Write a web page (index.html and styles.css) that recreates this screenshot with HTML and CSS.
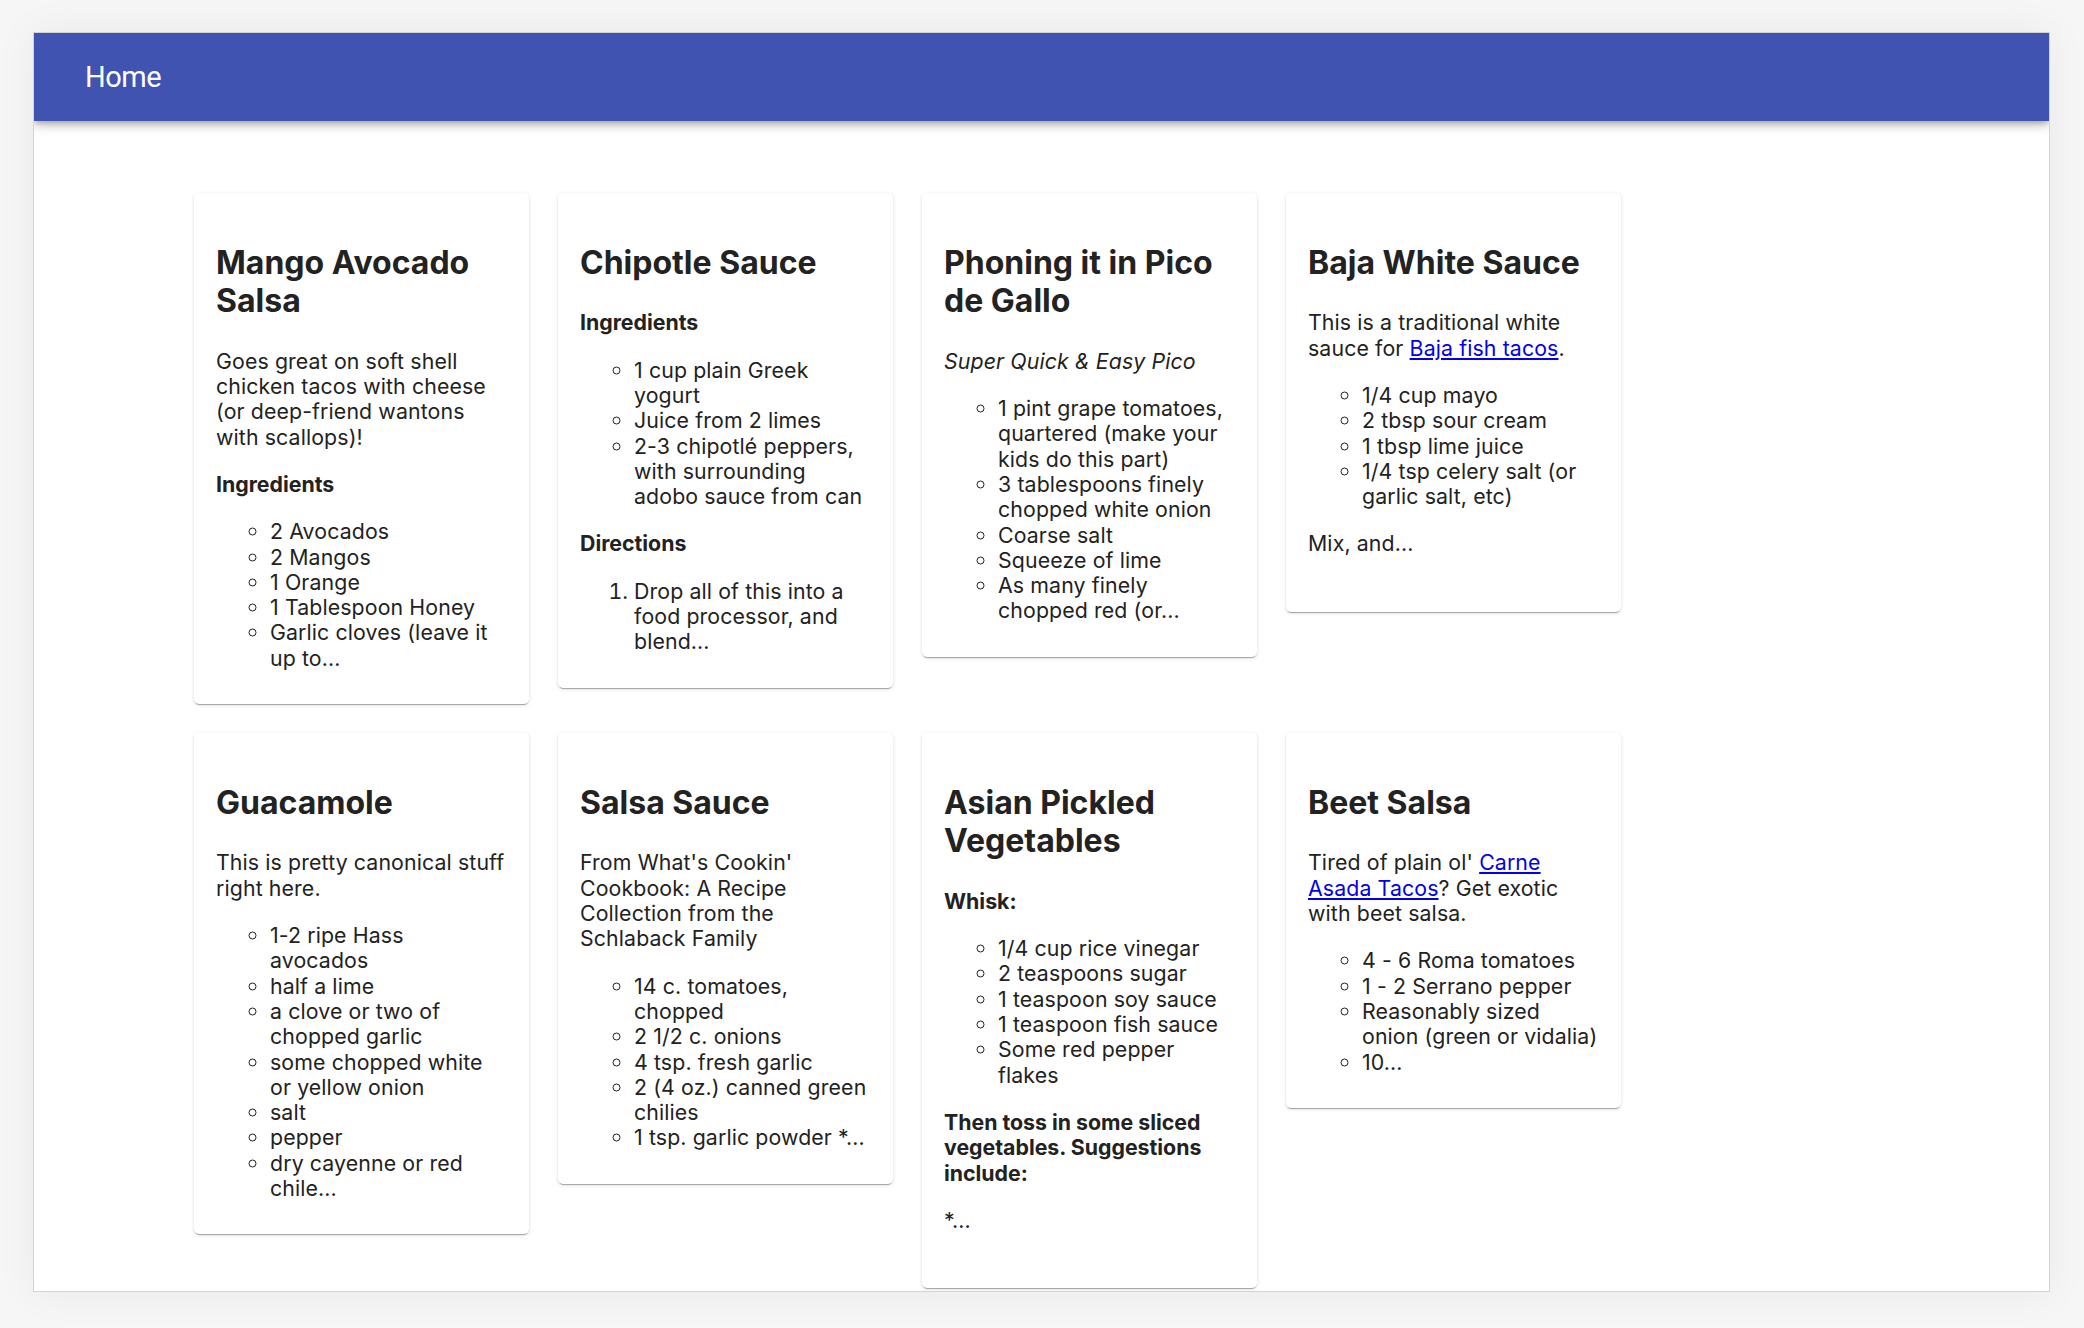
FILE: index.html
```html
<!DOCTYPE html>
<html lang="en">
<head>
<meta charset="utf-8">
<title>Home</title>
<link rel="stylesheet" href="styles.css">
</head>
<body>
<div class="window">
  <header class="appbar">
    <a class="home" href="#">Home</a>
  </header>
  <main class="content">
    <div class="grid">
      <article class="card">
        <h2>Mango Avocado Salsa</h2>
        <p>Goes great on soft shell chicken tacos with cheese (or deep-friend wantons with scallops)!</p>
        <h4>Ingredients</h4>
        <ul>
          <li>2 Avocados</li>
          <li>2 Mangos</li>
          <li>1 Orange</li>
          <li>1 Tablespoon Honey</li>
          <li>Garlic cloves (leave it up to...</li>
        </ul>
      </article>
      <article class="card">
        <h2>Chipotle Sauce</h2>
        <h4>Ingredients</h4>
        <ul>
          <li>1 cup plain Greek yogurt</li>
          <li>Juice from 2 limes</li>
          <li>2-3 chipotlé peppers, with surrounding adobo sauce from can</li>
        </ul>
        <h4>Directions</h4>
        <ol>
          <li>Drop all of this into a food processor, and blend...</li>
        </ol>
      </article>
      <article class="card">
        <h2>Phoning it in Pico de Gallo</h2>
        <p><em>Super Quick &amp; Easy Pico</em></p>
        <ul>
          <li>1 pint grape tomatoes, quartered (make your kids do this part)</li>
          <li>3 tablespoons finely chopped white onion</li>
          <li>Coarse salt</li>
          <li>Squeeze of lime</li>
          <li>As many finely chopped red (or...</li>
        </ul>
      </article>
      <article class="card">
        <h2>Baja White Sauce</h2>
        <p>This is a traditional white sauce for <a href="#">Baja fish tacos</a>.</p>
        <ul>
          <li>1/4 cup mayo</li>
          <li>2 tbsp sour cream</li>
          <li>1 tbsp lime juice</li>
          <li>1/4 tsp celery salt (or garlic salt, etc)</li>
        </ul>
        <p>Mix, and...</p>
      </article>
      <article class="card">
        <h2>Guacamole</h2>
        <p>This is pretty canonical stuff right here.</p>
        <ul>
          <li>1-2 ripe Hass avocados</li>
          <li>half a lime</li>
          <li>a clove or two of chopped garlic</li>
          <li>some chopped white or yellow onion</li>
          <li>salt</li>
          <li>pepper</li>
          <li>dry cayenne or red chile...</li>
        </ul>
      </article>
      <article class="card">
        <h2>Salsa Sauce</h2>
        <p>From What's Cookin' Cookbook: A Recipe Collection from the Schlaback Family</p>
        <ul>
          <li>14 c. tomatoes, chopped</li>
          <li>2 1/2 c. onions</li>
          <li>4 tsp. fresh garlic</li>
          <li>2 (4 oz.) canned green chilies</li>
          <li>1 tsp. garlic powder *...</li>
        </ul>
      </article>
      <article class="card">
        <h2>Asian Pickled Vegetables</h2>
        <h4>Whisk:</h4>
        <ul>
          <li>1/4 cup rice vinegar</li>
          <li>2 teaspoons sugar</li>
          <li>1 teaspoon soy sauce</li>
          <li>1 teaspoon fish sauce</li>
          <li>Some red pepper flakes</li>
        </ul>
        <h4>Then toss in some sliced vegetables. Suggestions include:</h4>
        <p>*...</p>
      </article>
      <article class="card">
        <h2>Beet Salsa</h2>
        <p>Tired of plain ol' <a href="#">Carne Asada Tacos</a>? Get exotic with beet salsa.</p>
        <ul>
          <li>4 - 6 Roma tomatoes</li>
          <li>1 - 2 Serrano pepper</li>
          <li>Reasonably sized onion (green or vidalia)</li>
          <li>10...</li>
        </ul>
      </article>
    </div>
  </main>
</div>
</body>
</html>
```

FILE: styles.css
```css
html, body {
  margin: 0;
  padding: 0;
}
body {
  background: #f6f6f6;
  height: 1328px;
  overflow: hidden;
  font-family: Inter, "Noto Sans", sans-serif;
  color: #222;
}
.window {
  margin: 32px 34px 0 33px;
  height: 1260px;
  background: #fff;
  border: 1px solid #d3d3d3;
  box-sizing: border-box;
  overflow: hidden;
  box-shadow: 0 0 40px rgba(0, 0, 0, 0.06);
}
.appbar {
  height: 88px;
  background: #4153b0;
  display: flex;
  align-items: center;
  padding-left: 51px;
  box-shadow: 0 3px 5px -1px rgba(0,0,0,0.2), 0 5px 10px 0 rgba(0,0,0,0.14), 0 1px 14px 0 rgba(0,0,0,0.12);
  position: relative;
  z-index: 1;
}
.home {
  color: #fff;
  text-decoration: none;
  font-family: Roboto, "Liberation Sans", sans-serif;
  font-size: 29px;
  letter-spacing: -0.5px;
}
.content {
  padding: 72px 0 0 160px;
}
.grid {
  display: grid;
  grid-template-columns: repeat(4, 335px);
  column-gap: 29px;
  row-gap: 29px;
  align-items: start;
}
.card {
  background: #fff;
  border-radius: 5px;
  box-shadow: 0 3px 1px -2px rgba(0,0,0,0.2), 0 1px 1px 0 rgba(0,0,0,0.14), 0 1px 4px 0 rgba(0,0,0,0.12);
  padding: 21px 22px 33px 22px;
  font-size: 21.3px;
  letter-spacing: 0.12px;
  line-height: 25.3px;
}
.card h2 {
  font-size: 32px;
  line-height: 38.4px;
  font-weight: 700;
  margin: 30px 0 28px;
  letter-spacing: 0;
}
.card h4 {
  font-size: 21.3px;
  font-weight: 700;
  margin: 21.5px 0;
  letter-spacing: 0;
}
.card p {
  margin: 22px 0;
}
.card ul, .card ol {
  margin: 22px 0;
  padding-left: 54px;
}
.card ul {
  list-style-type: circle;
}
.card > ul:last-child, .card > ol:last-child {
  margin-bottom: 0;
}
.card a {
  color: #0000ee;
}
```
